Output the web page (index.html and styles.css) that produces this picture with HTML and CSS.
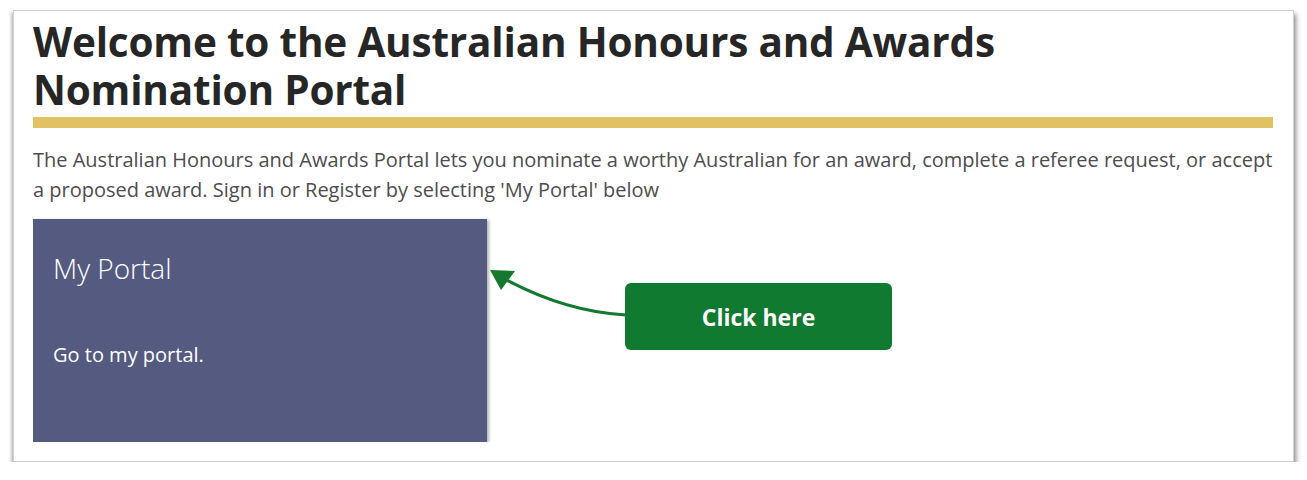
FILE: index.html
```html
<!DOCTYPE html>
<html lang="en">
<head>
<meta charset="utf-8">
<title>Australian Honours and Awards Nomination Portal</title>
<link rel="stylesheet" href="styles.css">
</head>
<body>
<div class="frame">
  <div class="content">
    <h1 class="title"><span class="title-line">Welcome to the Australian Honours and Awards</span><span class="title-line">Nomination Portal</span></h1>
    <div class="rule"></div>
    <p class="intro"><span class="line">The Australian Honours and Awards Portal lets you nominate a worthy Australian for an award, complete a referee request, or accept</span><span class="line">a proposed award. Sign in or Register by selecting 'My Portal' below</span></p>
    <div class="row">
      <div class="card">
        <div class="card-title">My Portal</div>
        <div class="card-text">Go to my portal.</div>
      </div>
      <svg class="arrow" width="140" height="70" viewBox="0 0 140 70" aria-hidden="true">
        <path d="M138 57 C 100 55, 60 45, 13 19" fill="none" stroke="#13792f" stroke-width="3.2" stroke-linecap="round"/>
        <path d="M2 12 L27 13 L13 32 Z" fill="#13792f"/>
      </svg>
      <div class="callout">Click here</div>
    </div>
  </div>
</div>
</body>
</html>
```
FILE: styles.css
```css
html, body {
  margin: 0;
  padding: 0;
  background: #ffffff;
}

.frame {
  margin: 10px 0 0 13px;
  width: 1279px;
  height: 450px;
  background: #ffffff;
  border: 1px solid #d0d0d0;
  box-shadow: 2px 4px 5px rgba(0, 0, 0, 0.45), -2px 2px 3px rgba(0, 0, 0, 0.2);
  overflow: hidden;
}

.content {
  margin-left: 19px;
  width: 1240px;
  overflow: hidden;
}

.title {
  margin: 7px 0 0 0;
  font-family: "Open Sans", "DejaVu Sans", sans-serif;
  font-weight: 700;
  font-size: 40.5px;
  line-height: 48px;
  color: #262626;
  letter-spacing: -0.2px;
}

.title-line {
  display: block;
  white-space: nowrap;
}

.rule {
  margin-top: 3px;
  height: 11px;
  background: #e0c263;
}

.intro {
  margin: 17px 0 0 0;
  font-family: "Open Sans", "DejaVu Sans", sans-serif;
  font-size: 20px;
  line-height: 30px;
  color: #4d4d4d;
}

.line {
  display: block;
  white-space: nowrap;
}

.row {
  display: flex;
  align-items: flex-start;
  margin-top: 14px;
}

.card {
  flex: none;
  width: 454px;
  height: 223px;
  background: #545a80;
  box-shadow: 2px 1px 3px rgba(0, 0, 0, 0.3);
  color: #ffffff;
  font-family: "Open Sans", "DejaVu Sans", sans-serif;
  padding: 0 20px;
  box-sizing: border-box;
}

.card-title {
  margin-top: 31px;
  font-size: 28px;
  font-weight: 300;
  line-height: 36px;
}

.card-text {
  margin-top: 57px;
  font-size: 20px;
  line-height: 24px;
}

.arrow {
  flex: none;
  margin-top: 39px;
  margin-left: 1px;
}

.callout {
  flex: none;
  margin-top: 64px;
  margin-left: -3px;
  width: 267px;
  height: 67px;
  border-radius: 6px;
  background: #107a31;
  color: #ffffff;
  font-family: "Open Sans", "DejaVu Sans", sans-serif;
  font-weight: 700;
  font-size: 23px;
  display: flex;
  align-items: center;
  justify-content: center;
}
```
